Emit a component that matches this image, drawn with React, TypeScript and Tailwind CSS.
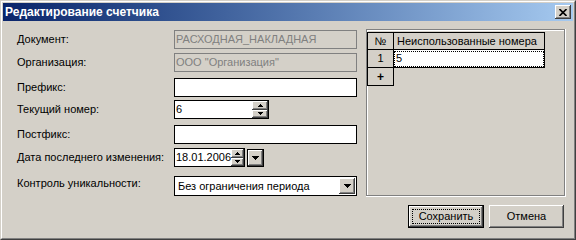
const raised =
  'bg-[#d4d0c8] shadow-[inset_-1px_-1px_0_#404040,inset_1px_1px_0_#ffffff,inset_-2px_-2px_0_#808080,inset_2px_2px_0_#d4d0c8]';

const UpArrow = () => (
  <svg width="5" height="3" viewBox="0 0 5 3" shapeRendering="crispEdges">
    <rect x="2" y="0" width="1" height="1" fill="#000" />
    <rect x="1" y="1" width="3" height="1" fill="#000" />
    <rect x="0" y="2" width="5" height="1" fill="#000" />
  </svg>
);

const DownArrow = ({ small = false }: { small?: boolean }) =>
  small ? (
    <svg width="5" height="3" viewBox="0 0 5 3" shapeRendering="crispEdges">
      <rect x="0" y="0" width="5" height="1" fill="#000" />
      <rect x="1" y="1" width="3" height="1" fill="#000" />
      <rect x="2" y="2" width="1" height="1" fill="#000" />
    </svg>
  ) : (
    <svg width="7" height="4" viewBox="0 0 7 4" shapeRendering="crispEdges">
      <rect x="0" y="0" width="7" height="1" fill="#000" />
      <rect x="1" y="1" width="5" height="1" fill="#000" />
      <rect x="2" y="2" width="3" height="1" fill="#000" />
      <rect x="3" y="3" width="1" height="1" fill="#000" />
    </svg>
  );

const Spin = () => (
  <div className="flex flex-col w-[16px] h-full">
    <div className={`${raised} flex-1 flex items-center justify-center`}>
      <UpArrow />
    </div>
    <div className={`${raised} flex-1 flex items-center justify-center`}>
      <DownArrow small />
    </div>
  </div>
);

const Label = ({ children, className = '' }: { children: React.ReactNode; className?: string }) => (
  <div className={`w-[157px] shrink-0 ${className}`}>{children}</div>
);

const Disabled = ({ text }: { text: string }) => (
  <div className="w-[183px] h-[19px] border border-[#808080] text-[#808080] pl-[1px] flex items-center">
    {text}
  </div>
);

const WhiteBox = ({ w, children }: { w: string; children?: React.ReactNode }) => (
  <div className={`${w} h-[19px] border border-black bg-white pl-[1px] flex items-center`}>
    {children}
  </div>
);

export default function App() {
  return (
    <div
      className="w-[576px] h-[240px] border border-t-[#d4d0c8] border-l-[#d4d0c8] border-r-[#404040] border-b-[#404040] bg-[#d4d0c8] text-[11px] text-black leading-none"
      style={{ fontFamily: '"Liberation Sans", Arial, sans-serif' }}
    >
      <div className="w-full h-full border border-t-white border-l-white border-r-[#808080] border-b-[#808080] p-[1px] flex flex-col">
        {/* title bar */}
        <div className="h-[18px] shrink-0 bg-gradient-to-r from-[#0a246a] to-[#a6caf0] flex items-center pl-[2px] pr-[2px]">
          <span className="text-white font-bold text-[12px] flex-1">Редактирование счетчика</span>
          <div className={`${raised} w-[16px] h-[14px] flex items-center justify-center`}>
            <svg width="8" height="7" viewBox="0 0 8 7">
              <path d="M0.5 0 L7.5 7 M7.5 0 L0.5 7" stroke="#000" strokeWidth="1.6" />
            </svg>
          </div>
        </div>

        {/* body */}
        <div className="flex-1 flex flex-col px-[14px] pr-[7px]">
          <div className="flex">
            <div className="flex flex-col w-[340px]">
              <div className="flex items-center h-[19px] mt-[9px]">
                <Label>Документ:</Label>
                <Disabled text="РАСХОДНАЯ_НАКЛАДНАЯ" />
              </div>
              <div className="flex items-center h-[19px] mt-[4px]">
                <Label>Организация:</Label>
                <Disabled text={'ООО "Организация"'} />
              </div>
              <div className="flex items-center h-[19px] mt-[6px]">
                <Label>Префикс:</Label>
                <WhiteBox w="w-[183px]" />
              </div>
              <div className="flex items-center h-[19px] mt-[3px]">
                <Label>Текущий номер:</Label>
                <div className="w-[95px] h-[19px] border border-black bg-white flex">
                  <span className="flex-1 pl-[1px] flex items-center">6</span>
                  <Spin />
                </div>
              </div>
              <div className="flex items-center h-[19px] mt-[6px]">
                <Label>Постфикс:</Label>
                <WhiteBox w="w-[183px]" />
              </div>
              <div className="flex items-center h-[19px] mt-[4px]">
                <Label>Дата последнего изменения:</Label>
                <div className="w-[71px] h-[19px] border border-black bg-white flex">
                  <span className="flex-1 pl-[1px] flex items-center">18.01.2006</span>
                  <Spin />
                </div>
                <div className="ml-[2px] w-[17px] h-[18px] border border-black flex">
                  <div className={`${raised} flex-1 flex items-center justify-center`}>
                    <DownArrow />
                  </div>
                </div>
              </div>
              <div className="flex items-center h-[20px] mt-[9px]">
                <Label className="mb-[6px]">Контроль уникальности:</Label>
                <div className="w-[183px] h-[20px] border border-black bg-white flex">
                  <span className="flex-1 pl-[3px] flex items-center">Без ограничения периода</span>
                  <div className={`${raised} w-[16px] my-[1px] mr-[1px] flex items-center justify-center`}>
                    <DownArrow />
                  </div>
                </div>
              </div>
            </div>

            {/* right panel */}
            <div className="ml-[9px] mt-[8px] w-[200px] h-[168px] border-r border-b border-white">
              <div className="w-full h-full border border-[#808080] shadow-[inset_1px_1px_0_#ffffff] pt-[2px]">
                <table className="border-collapse">
                  <tbody>
                    <tr className="h-[17px]">
                      <td className="w-[26px] border border-black text-center bg-[#d4d0c8]">№</td>
                      <td className="w-[151px] border border-black pl-[3px] bg-[#d4d0c8]">
                        Неиспользованные номера
                      </td>
                    </tr>
                    <tr className="h-[18px]">
                      <td className="border border-black text-center bg-[#d4d0c8]">1</td>
                      <td className="border border-black bg-white p-0">
                        <div className="h-[16px] border border-dotted border-black flex items-center pl-[1px]">5</div>
                      </td>
                    </tr>
                    <tr className="h-[18px]">
                      <td className="border border-black text-center bg-[#d4d0c8] font-bold text-[12px]">+</td>
                      <td />
                    </tr>
                  </tbody>
                </table>
              </div>
            </div>
          </div>

          {/* buttons */}
          <div className="flex justify-end gap-[5px] mt-[8px] pr-[2px]">
            <div className="w-[76px] h-[23px] border border-black flex">
              <div className={`${raised} flex-1 p-[3px] flex`}>
                <div className="flex-1 border border-dotted border-black flex items-center justify-center">
                  Сохранить
                </div>
              </div>
            </div>
            <div className={`${raised} w-[75px] h-[23px] flex items-center justify-center`}>Отмена</div>
          </div>
        </div>
      </div>
    </div>
  );
}
